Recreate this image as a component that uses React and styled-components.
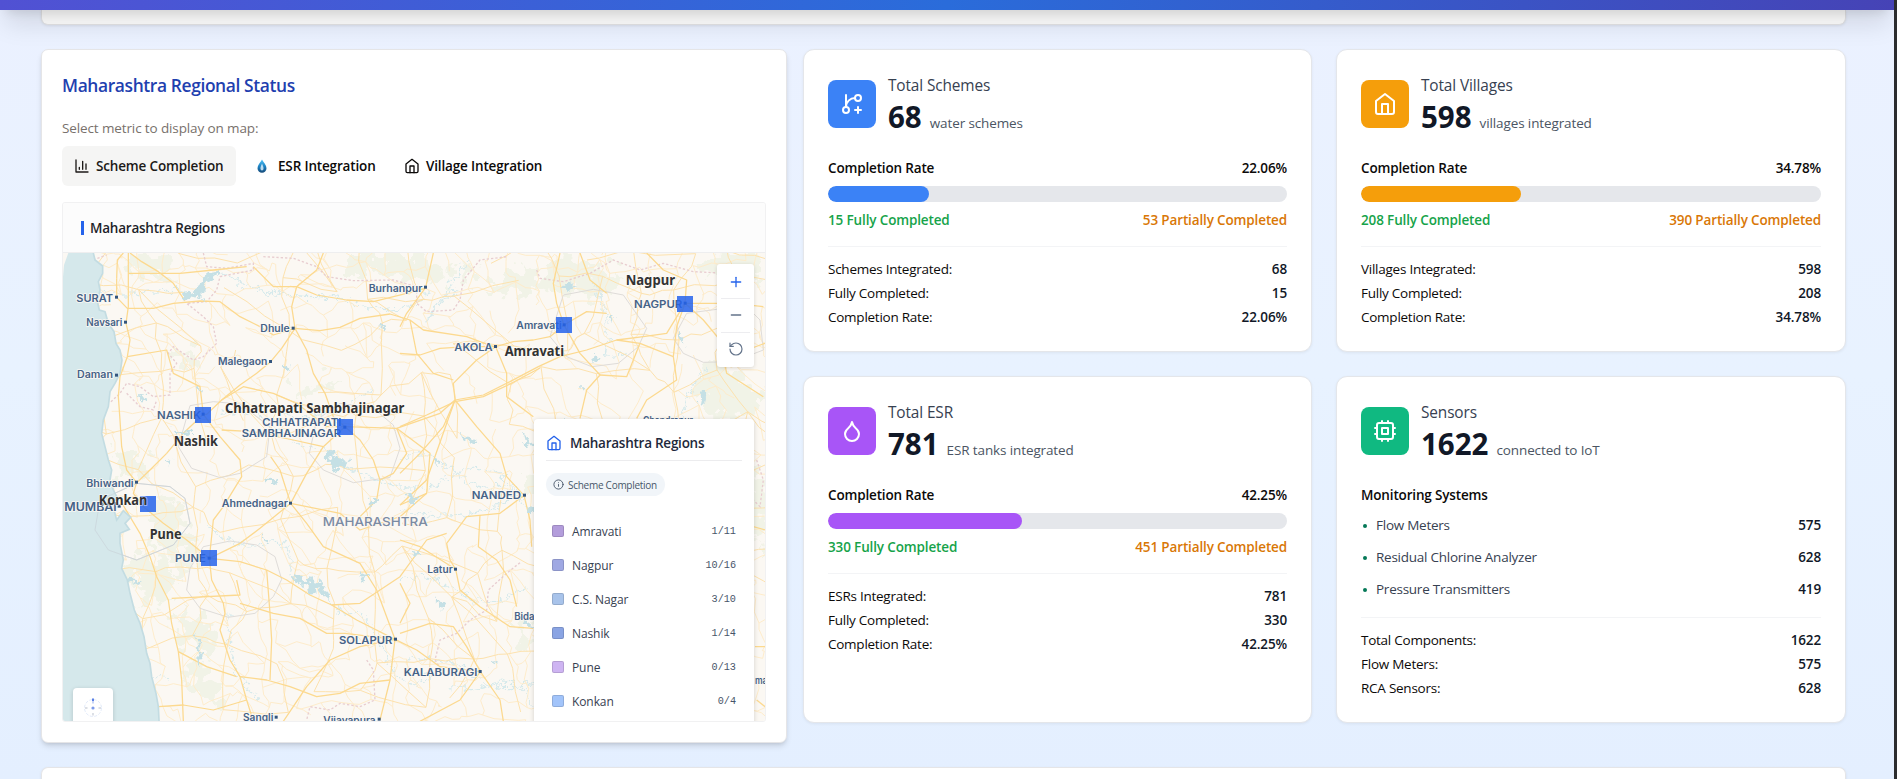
import React from "react";
import styled, { createGlobalStyle } from "styled-components";
import { GitBranchPlus, Droplet, Info, Plus, Minus, RotateCcw } from "lucide-react";

const Global = createGlobalStyle`
  *, *::before, *::after { box-sizing: border-box; }
  body { margin: 0; font-family: "Open Sans", "Noto Sans", sans-serif; color: #0c0a09; font-size: 13.5px; }
`;

const Page = styled.div`
  height: 779px;
  overflow: hidden;
  display: flex;
  flex-direction: column;
  border-right: 3px solid #2b2c2e;
  background: linear-gradient(180deg, #ebf1ff 0%, #e8f2ff 48%, #e4efff 100%);
`;

const TopBar = styled.header`
  flex: none;
  height: 80px;
  margin-top: -70px;
  position: relative;
  z-index: 5;
  background: linear-gradient(90deg, #5151d3 0%, #2a6cda 50%, #4643b6 100%);
  box-shadow: 0 20px 25px -5px rgba(0, 0, 0, 0.1), 0 8px 10px -6px rgba(0, 0, 0, 0.1);
`;

const Content = styled.main`
  flex: none;
  width: 1805px;
  margin-left: 41px;
  display: flex;
  flex-direction: column;
  gap: 24px;
`;

const Sheet = styled.section`
  height: ${(p) => p.$height}px;
  background: #fff;
  border: 1px solid #e5e5e7;
  border-radius: ${(p) => (p.$edge === "bottom" ? "0 0 7px 7px" : "7px 7px 0 0")};
  border-${(p) => (p.$edge === "bottom" ? "top" : "bottom")}: 0;
  box-shadow: 0 1px 3px rgba(0, 0, 0, 0.08);
`;

const Columns = styled.div`
  display: grid;
  grid-template-columns: 746px 1043px;
  justify-content: space-between;
  align-items: start;
`;

const Panel = styled.section`
  height: 694px;
  padding: 20px 20px 0;
  background: #fff;
  border: 1px solid #e5e5e7;
  border-radius: 7px;
  box-shadow: 0 4px 6px -1px rgba(0, 0, 0, 0.12), 0 2px 4px -2px rgba(0, 0, 0, 0.12);
`;

const PanelTitle = styled.h2`
  margin: 0;
  height: 30px;
  line-height: 30px;
  font-size: 17.4px;
  font-weight: 600;
  letter-spacing: -0.38px;
  color: #1e40af;
`;

const Hint = styled.div`
  margin-top: 18px;
  line-height: 20px;
  letter-spacing: -0.12px;
  color: #78716c;
`;

const Tabs = styled.div`
  display: flex;
  gap: 6px;
  margin-top: 8px;
`;

const Tab = styled.button`
  height: 40px;
  width: ${(p) => p.$width}px;
  padding: 0 0 0 ${(p) => p.$inset || 12}px;
  display: flex;
  align-items: center;
  gap: ${(p) => p.$gap || 6}px;
  border: 0;
  border-radius: 6px;
  background: ${(p) => (p.$active ? "#f5f5f4" : "transparent")};
  color: ${(p) => (p.$active ? "#1c1917" : "#0c0a09")};
  font: 600 13.5px "Open Sans", sans-serif;
  letter-spacing: -0.16px;
  white-space: nowrap;
`;

const MapBox = styled.div`
  margin-top: 16px;
  height: 520px;
  display: flex;
  flex-direction: column;
  border: 1px solid #f1f1f2;
  border-radius: 3px;
  overflow: hidden;
`;

const MapHead = styled.div`
  flex: none;
  height: 50px;
  padding: 0 18px;
  display: flex;
  align-items: center;
  gap: 6px;
  background: #fcfcfc;
  border-bottom: 1px solid #eeeeef;
  font-weight: 600;
  letter-spacing: -0.22px;
  color: #1c1f2a;
  &::before { content: ""; width: 3px; height: 14px; background: #2563eb; }
`;

const MapCanvas = styled.div`
  position: relative;
  flex: 1;
  overflow: hidden;
`;

const MapSvg = styled.svg`
  display: block;
  width: 702px;
  height: 469px;
`;

const Controls = styled.div`
  position: absolute;
  top: 11px;
  right: 11px;
  width: 37px;
  height: 103px;
  padding: 2px 4px;
  display: flex;
  flex-direction: column;
  background: #fff;
  border-radius: 3px;
  box-shadow: 0 1px 4px rgba(0, 0, 0, 0.14);
`;

const Control = styled.button`
  flex: 1;
  padding: 0;
  display: flex;
  align-items: center;
  justify-content: center;
  border: 0;
  background: none;
  color: ${(p) => p.$color};
  & + & { border-top: 1px solid #ededf0; }
`;

const Compass = styled.div`
  position: absolute;
  left: 10px;
  top: 435px;
  width: 40px;
  height: 40px;
  display: flex;
  align-items: center;
  justify-content: center;
  background: #fff;
  border-radius: 4px;
  box-shadow: 0 1px 4px rgba(0, 0, 0, 0.16);
`;

const Legend = styled.aside`
  position: absolute;
  left: 471px;
  top: 166px;
  width: 220px;
  height: 320px;
  padding: 7px 12px;
  background: #fff;
  border-radius: 4px 4px 0 0;
  box-shadow: 0 1px 5px rgba(0, 0, 0, 0.16);
`;

const LegendTitle = styled.div`
  height: 35px;
  padding-bottom: 1px;
  display: flex;
  align-items: center;
  gap: 8px;
  border-bottom: 1px solid #ececee;
  font-size: 13.5px;
  font-weight: 600;
  letter-spacing: -0.25px;
  color: #1e293b;
`;

const Pill = styled.div`
  width: 119px;
  height: 23px;
  margin: 12px 0 18px;
  padding: 0 0 0 7px;
  display: flex;
  align-items: center;
  gap: 4px;
  border-radius: 12px;
  background: #f1f5f9;
  font-size: 10px;
  letter-spacing: -0.27px;
  color: #475569;
  white-space: nowrap;
  svg { flex: none; }
`;

const LegendRow = styled.div`
  height: 34px;
  padding: 0 6px;
  display: flex;
  align-items: center;
  font-size: 12px;
  letter-spacing: -0.1px;
  color: #374151;
`;

const Swatch = styled.span`
  width: 12px;
  height: 12px;
  margin-right: 8px;
  border-radius: 2px;
  background: ${(p) => p.$color};
  border: 1px solid rgba(0, 0, 0, 0.12);
`;

const Ratio = styled.span`
  margin-left: auto;
  font: 10.2px "Liberation Mono", monospace;
  letter-spacing: 0;
  color: #475569;
`;

const Stats = styled.div`
  display: grid;
  grid-template-columns: 509px 510px;
  grid-template-rows: 303px 347px;
  gap: 24px;
`;

const Card = styled.article`
  padding: 30px 24px 0;
  background: #fff;
  border: 1px solid #e4e6ea;
  border-radius: 11px;
  box-shadow: 0 1px 3px rgba(0, 0, 0, 0.06);
`;

const CardHead = styled.div`
  height: 48px;
  display: flex;
  gap: 12px;
`;

const IconTile = styled.div`
  width: 48px;
  height: 48px;
  display: flex;
  align-items: center;
  justify-content: center;
  border-radius: 8px;
  background: ${(p) => p.$color};
  color: #fff;
`;

const HeadText = styled.div`
  display: flex;
  flex-direction: column;
`;

const CardTitle = styled.h3`
  margin: -6px 0 0;
  font-size: 15.4px;
  line-height: 24px;
  font-weight: 500;
  letter-spacing: -0.12px;
  color: #374151;
`;

const Figure = styled.div`
  display: flex;
  align-items: baseline;
  gap: 8px;
  margin-top: 1px;
  line-height: 36px;
`;

const Big = styled.span`
  font-size: 29.5px;
  font-weight: 700;
  color: #111827;
`;

const Unit = styled.span`
  letter-spacing: -0.12px;
  color: #4b5563;
`;

const Line = styled.div`
  display: flex;
  justify-content: space-between;
  line-height: ${(p) => p.$h || 24}px;
  font-weight: ${(p) => (p.$strong ? 600 : 400)};
  letter-spacing: ${(p) => (p.$strong ? -0.16 : -0.25)}px;
`;

const Value = styled.span`
  font-weight: 600;
  letter-spacing: -0.14px;
  color: ${(p) => p.$color || "#111827"};
`;

const Rate = styled.div`
  margin-top: 30px;
`;

const Track = styled.div`
  height: 16px;
  margin: 8px 0 6px;
  border-radius: 8px;
  background: #e5e7eb;
  overflow: hidden;
`;

const Fill = styled.div`
  height: 100%;
  border-radius: 8px;
  background: ${(p) => p.$color};
`;

const Details = styled.div`
  margin-top: ${(p) => p.$gap}px;
  padding-top: 10px;
  border-top: 1px solid #f3f4f6;
`;

const Systems = styled.ul`
  list-style: none;
  margin: 4px 0 0;
  padding: 0;
`;

const System = styled.li`
  height: 32px;
  display: flex;
  align-items: center;
  letter-spacing: -0.25px;
  color: #374151;
  &::before {
    content: "";
    width: 4px;
    height: 4px;
    margin: 1px 9px 0 2px;
    border-radius: 50%;
    background: #047857;
  }
  ${Value} { margin-left: auto; }
`;

const HomeIcon = ({ size, color = "currentColor", stroke = 2 }) => (
  <svg width={size} height={size} viewBox="0 0 24 24" fill="none" stroke={color} strokeWidth={stroke} strokeLinecap="round" strokeLinejoin="round">
    <path d="M3 9l9-7 9 7v11a2 2 0 0 1-2 2H5a2 2 0 0 1-2-2z" />
    <path d="M9 22V12h6v10" />
  </svg>
);

const ChartIcon = () => (
  <svg width="16" height="16" viewBox="0 0 24 24" fill="none" stroke="currentColor" strokeWidth="2" strokeLinecap="round" strokeLinejoin="round">
    <path d="M3 3v18h18M18 17V9M13 17V5M8 17v-3" />
  </svg>
);

const ChipIcon = () => (
  <svg width="24" height="24" viewBox="0 0 24 24" fill="none" stroke="currentColor" strokeWidth="2" strokeLinecap="round" strokeLinejoin="round">
    <rect x="4" y="4" width="16" height="16" rx="2" />
    <rect x="9" y="9" width="6" height="6" />
    <path d="M15 2v2M15 20v2M2 15h2M2 9h2M20 15h2M20 9h2M9 2v2M9 20v2" />
  </svg>
);

const DropIcon = () => (
  <svg width="12" height="14" viewBox="0 0 12 14">
    <defs>
      <linearGradient id="drop" x1="0" y1="0" x2="0" y2="1">
        <stop offset="0" stopColor="#4fc3f7" />
        <stop offset="0.55" stopColor="#1b7fc0" />
        <stop offset="1" stopColor="#174a78" />
      </linearGradient>
    </defs>
    <path d="M6 .5C7.600 3.600 10.500 6 10.500 9.200a4.500 4.500 0 0 1-9 0C1.500 6 4.400 3.600 6 .5z" fill="url(#drop)" />
    <path d="M6 4.500C6.800 6.500 7.700 8 7.500 9.700a1.500 1.700 0 0 1-3 0C4.300 8 5.200 6.500 6 4.500z" fill="#d8eefa" opacity="0.85" />
  </svg>
);

const CompassIcon = () => (
  <svg width="20" height="20" viewBox="0 0 20 20" fill="none">
    <circle cx="10" cy="10" r="8.500" stroke="#dbe4f8" strokeWidth="0.8" strokeDasharray="3 1.500" />
    <circle cx="10" cy="10" r="1.600" fill="#7d9bea" />
    <rect x="9" y="0.500" width="2" height="2.500" fill="#5a80e6" />
    <rect x="9" y="3" width="2" height="2.500" fill="#c9d6f7" />
    <path d="M2 10h2.500M15.500 10H18" stroke="#b9bfcb" strokeWidth="1.200" />
    <path d="M10 15v2.500" stroke="#d4d8e0" strokeWidth="1.600" />
  </svg>
);

/* ---------- Map drawing: one unit is a third of a pixel ---------- */

const COAST =
  "M60 0H165L160 39 165 60 188 78 188 100 175 125 180 150 172 185 178 210 195 215 205 250 222 275 228 310 240 330 246 360 240 400 225 430 210 455 205 500 190 540 185 580 195 620 205 660 215 690 210 720 220 750 230 770 222 810 230 840 250 812 272 832 255 850 268 868 240 880 240 910 250 960 245 985 262 1020 270 1060 283 1110 300 1150 312 1190 320 1240 330 1270 335 1310 348 1360 355 1400 358 1460H60Z";

const FORESTS = [
  "M270 60l50-20 60 30 20 50-40 10-60-30z", "M930 39h180l40 30 60 10-20 40-90-10-80-20-90 20z", "M760 455l50-25 60-10 20 20-50 20-60 15z",
  "M1330 150l60-50 90 10 80-60 100 20 20 50-110 40-90-20-100 30z", "M1570 100l50-40 110 30 20 50-110 30z", "M1960 60l60-20 130 10 20 70-90 20-90-30z",
  "M1960 640l60-20 90 60 60-10v180l-60-40-120-60-60-50z", "M1970 390l60-20 90 50 40 60-30 50-120 0-40-60z", "M1640 650l90-20 80 30 10 40-100-10-60 20z", "M1470 700l30 20 50 60-20 20-60-30z",
  "M350 760l60 30 30 80-20 40 50 30-10 60-60-10-40-90-40-50z", "M270 950l60-30 60 70 10 90-80 20-50-70z", "M400 1120l60-10 60 50 20 60-60 20-60-40z",
  "M440 1250l60 30 20 60 40 50-60-10-60-50z", "M225 640l50-20 40 30-10 60-60 20z", "M1100 39l90 20 30 60-60 10z", "M2140 760l30 10v160l-40-60z", "M390 330l60 10 30 50-50-10z",
  "M1250 60l70 20-10 50-70-20z", "M1420 1150l60 20 20 60-60-10z",
];

const LAKES = [
  "M440 155l25-5 25-35 25-20 35-3-15 12-22 8-18 30-6 38-20-12-20 15-12-10z",
  "M850 630l22 6 4 14 18-8 12 18 18 6-6 20-18-6-14 18-8-22-12-4 2-16-14-6z",
  "M760 1008l20 2 10 14 30-6 8 10 18-10-6 20 20 10 14 28-22-8-16-20-20 4-10-14-30-6z",
  "M470 1180l10 30 8 30-2 40-6-4-2-40-8-30z", "M400 565l20 8 30 2 4 10-26-2-20-8z", "M720 375l12 6 14-4-6 16-14-4z", "M466 430l14 8 4 12-14-6z",
  "M290 465l18 4 16 4-12 12-14-4z", "M380 655l14 6-8 12z", "M670 718l40 4 4 10-20-4-22 2z",
  "M1188 650l12 6v16l-8-6z",
  "M1570 135l20-8 16 12-20 10z", "M1640 590l22 4 12 16-26-8z", "M1920 270l10 20-4 20-8-24z", "M1985 680l12 16-8 36-6-26z",
  "M1560 725l30 4 20-4-6 12-40 0z", "M1650 555l14 6-12 8z", "M1100 773l26-6 14 6-20 12z", "M1450 810l30-8 20 20-30-4z", "M990 780l16-4 10 10-20 6z",
  "M1255 585l40 4 24 18-40-4z", "M1450 575l30 40-18 6z", "M1110 930l24 4 14 8-30 2z", "M1190 1070l20 30-8 12z", "M960 1000l20 8 8 14-22-10z", "M660 880l24 24-8 6z",
  "M1020 250l12 8-8 12z", "M1570 540l18 10-8 8z", "M1710 230l14 8-10 10z", "M262 1012l34 10-6 12-28-6z", "M1455 1140l14 0 8 26-14-2z",
  "M1660 345l20 4-8 14-16-8z", "M1620 435l10 4-8 8z", "M1985 460l14 4-6 24-14 6z", "M1350 1260l22 10-10 6z", "M868 500l0 0z", "M1100 768l20-8 6 14-18 6z", "M1195 1080l16 14-6 16z",
];

const RIVERS = [
  "M180 150Q230 175 300 160T440 155", "M550 95Q600 140 680 155T830 170 960 195 1100 200 1157 142", "M545 520Q640 500 700 560T880 640", "M925 680Q1000 720 1080 740T1250 700 1460 780",
  "M510 860Q600 940 680 910T750 1000", "M860 1070Q900 1130 940 1120T1040 1250 1180 1290", "M570 1120Q560 1220 590 1290T660 1380", "M1110 1260Q1220 1240 1290 1300T1480 1330",
  "M1660 135Q1720 230 1700 300T1760 340", "M2000 380Q1940 440 1920 560T1980 700", "M1080 810Q1200 840 1300 820T1420 760", "M1080 650Q1160 620 1240 690T1360 740 1460 800",
  "M1080 1010Q1180 1000 1260 1060T1460 1040", "M1240 1340Q1300 1350 1370 1330T1480 1400", "M340 1310Q370 1290 380 1330", "M730 520Q780 540 860 520T1000 440", "M1250 150Q1180 200 1160 240T1280 60",
];

const BORDERS = [
  "M160 60L200 45M490 39L500 80 560 85 640 70 640 90 540 110 530 150 500 185 440 190 490 230 520 260 530 310 490 350 460 360 400 320 385 340 410 370 390 400 390 465 340 470 300 440 260 430 240 460 210 488M260 460L300 500 340 510 350 480",
  "M670 50L760 55 830 80 860 110 940 122 1060 120 1130 140 1130 190 1160 215 1240 210 1260 180 1270 120 1320 60 1400 50",
  "M1490 90L1500 115 1570 125 1650 100 1720 60 1800 90 1870 70 1960 95 2060 100",
  "M1440 968L1400 1000 1345 1050 1340 1110 1290 1140 1250 1180 1200 1200 1185 1260M1185 1260L1210 1300M980 1260L1000 1290 1005 1380 960 1400 900 1390 870 1410 810 1400 800 1440",
  "M2150 660L2170 720 2160 800 2140 780",
];

const AREAS = [
  "450 497 520 485 600 492 690 560 680 650 600 700 540 713 455 685 415 620",
  "808 640 850 690 940 728 1050 712 1080 625 1060 555 1000 505 900 490 830 540",
  "1530 290 1570 165 1660 148 1750 165 1820 265 1795 320 1735 370 1655 380 1580 350",
  "1900 295 1940 220 2030 208 2120 200 2160 240 2170 330 2080 365 1990 367 1930 340",
  "440 1050 450 985 490 920 570 903 650 915 705 950 725 1018 700 1070 645 1120 565 1132 480 1105",
  "165 870 180 780 290 730 390 740 435 775 450 850 400 915 290 960 205 930",
];

const MAJOR = [
  "230 115 230 172 262 205 340 205 400 190 480 183 540 185 600 230 660 260 700 285 765 265 840 272 900 262 960 235 1050 222 1110 240 1150 270 1280 290 1360 320",
  "250 39 232 60 230 115", "265 39 265 200 258 250 270 300 262 350 240 410 235 470 240 540 245 620 260 690 290 728",
  "435 183 400 130 355 95 305 65 270 39", "265 100 420 100 520 90 620 80", "640 80 700 140 770 140 830 165 920 180 1000 185 1100 160 1156 145",
  "850 39 830 90 770 140 755 200 765 265 725 325 692 365 650 400 600 435 545 480 500 523 490 523", "765 265 800 330 820 400 855 460 880 530 915 560",
  "490 523 430 580 380 640 330 690 290 728", "490 523 540 590 600 660 605 710 550 800 520 840 508 955", "490 523 480 440 400 400 380 330 262 350", "915 560 1070 565 1200 520 1245 480",
  "915 560 960 600 1000 660 1020 720 1010 780 960 830", "915 560 850 620 800 700 752 790", "545 480 610 440 700 460 770 490 860 560 915 560", "1070 565 1100 640 1060 700 1020 720",
  "545 570 640 575 760 600 850 620", "1080 795 1160 760 1170 640 1070 565",
  "1110 240 1130 340 1180 400 1240 420", "1080 340 1140 345 1200 325 1280 320 1367 320 1420 305 1480 300 1530 290 1572 255 1640 215 1700 220",
  "1080 795 1160 720 1245 480 1330 465 1410 425 1495 380 1560 350 1640 330 1730 300 1810 290 1880 280 1935 190", "1080 560 1160 525 1245 485 1330 470 1410 432 1500 384",
  "1935 190 2080 190 2170 200", "1935 190 1940 120 1870 90 1820 39", "1935 190 1990 240 2040 300 2120 330 2175 310", "1935 190 1910 260 1900 350 1800 310 1730 300",
  "1157 142 1180 39", "1157 142 1100 220 1080 260", "1367 320 1400 400 1400 470 1480 530", "1367 320 1310 360 1240 430 1245 480 1210 560 1140 640 1080 700", "1572 255 1550 190 1540 130 1560 39",
  "1572 255 1620 340 1680 405 1640 450 1620 535", "1680 405 1760 410 1800 310", "1900 350 1910 420 1820 480 1790 535", "1245 480 1310 560 1380 640 1400 710 1452 766", "2040 300 2060 400 2170 470",
  "508 955 440 900 370 850 310 800 280 760 290 728", "508 955 600 965 680 990 740 1020 810 1065 875 1095 950 1140 1065 1198 1130 1230 1200 1280 1321 1295",
  "508 955 515 1020 550 1090 555 1120 540 1170 570 1260 600 1310 620 1380 640 1444", "600 1310 680 1320 750 1340 830 1370 900 1360 960 1330 1050 1320",
  "508 955 600 910 660 865 752 790 720 690 692 650", "752 790 800 850 850 920 960 970 1010 1050 1065 1198", "752 790 900 820 960 870 1080 830 1160 760",
  "240 780 300 880 330 950 350 1010 385 1080 395 1150 415 1235 425 1320 430 1444", "395 1075 600 1065 590 1020", "415 1235 500 1280 590 1310", "600 1090 700 1120 780 1135 860 1180 915 1180 1065 1198",
  "875 1095 960 1090 1080 1010 1160 900 1220 880", "1065 1198 1050 1320 1020 1440", "1065 1198 960 1220 870 1260 800 1340 730 1444", "680 990 690 1120 695 1200 690 1320",
  "1452 766 1380 820 1280 830 1220 910 1230 960 1247 988 1260 1050 1320 1100 1410 1160 1480 1165", "1247 988 1140 920 1080 900", "1321 1295 1280 1220 1240 1160 1170 1150 1080 1180", "1321 1295 1380 1380 1390 1444",
  "1452 766 1470 840 1475 920", "1321 1295 1260 1380 1140 1444", "1320 825 1315 920 1370 960 1410 1020 1430 1100", "1080 1030 1110 1090 1080 1150", "355 1400 430 1395 520 1410 620 1380",
  "2140 860 2175 870", "2145 1220 2175 1220", "2150 1380 2175 1400", "1620 39 1650 120 1700 160",
];

function buildRoadNet(seed, step, jitter, chance) {
  const rnd = () => ((seed = (seed * 16807) % 2147483647) / 2147483647);
  const cols = Math.ceil(2200 / step);
  const rows = Math.ceil(1480 / step);
  const pts = [];
  for (let r = 0; r < rows; r++)
    for (let c = 0; c < cols; c++)
      pts.push([50 + c * step + (rnd() - 0.5) * jitter, 20 + r * step + (rnd() - 0.5) * jitter]);
  let d = "";
  const link = (a, b) => {
    const w = () => (rnd() - 0.5) * 20;
    const at = (t) => `${(a[0] + (b[0] - a[0]) * t + w()).toFixed(0)} ${(a[1] + (b[1] - a[1]) * t + w()).toFixed(0)}`;
    d += `M${a[0].toFixed(0)} ${a[1].toFixed(0)}L${at(0.3)} ${at(0.65)} ${b[0].toFixed(0)} ${b[1].toFixed(0)}`;
  };
  for (let r = 0; r < rows; r++)
    for (let c = 0; c < cols; c++) {
      const i = r * cols + c;
      if (c < cols - 1 && rnd() < chance) link(pts[i], pts[i + 1]);
      if (r < rows - 1 && rnd() < chance) link(pts[i], pts[i + cols]);
      if (c < cols - 1 && r < rows - 1 && rnd() < 0.22) link(pts[i], pts[i + cols + 1]);
    }
  return d;
}
const MINOR = buildRoadNet(7919, 62, 52, 0.6);
const SECONDARY = buildRoadNet(4211, 135, 100, 0.6);

/* name, left edge, baseline, drawn width, size, dot centre */
const PLACES = [
  ["SURAT", 109, 187, 110, 31, 230, 172], ["Navsari", 139, 259, 108, 29, 257, 247], ["Burhanpur", 986, 155, 161, 29, 1157, 142],
  ["Dhule", 661, 276, 88, 29, 760, 265], ["Malegaon", 534, 376, 148, 29, 692, 365], ["Daman", 111, 415, 108, 29, 230, 406],
  ["NASHIK", 351, 536, 132, 31, 490, 523], ["CHHATRAPATI", 667, 558, 237, 31], ["SAMBHAJINAGAR", 605, 591, 298, 31, 915, 562],
  ["Bhiwandi", 139, 740, 142, 29, 290, 727], ["MUMBAI", 73, 813, 157, 34, 238, 799], ["Ahmednagar", 545, 801, 199, 29, 752, 790],
  ["PUNE", 405, 966, 92, 31, 508, 955], ["SOLAPUR", 897, 1212, 160, 31, 1067, 1198], ["Sangli", 609, 1444, 91, 29, 709, 1432],
  ["Vijayapura", 850, 1453, 157, 29, 1018, 1438], ["NANDED", 1295, 778, 148, 31, 1454, 766], ["Latur", 1162, 1000, 76, 29, 1247, 988],
  ["KALABURAGI", 1091, 1308, 221, 31, 1321, 1295], ["Bidar", 1423, 1140, 72, 29], ["mam", 2145, 1331, 60, 29], ["AKOLA", 1243, 332, 115, 31, 1367, 320],
  ["Amravati", 1429, 266, 136, 29, 1573, 255], ["NAGPUR", 1782, 203, 145, 31, 1936, 190], ["Chandrapur", 1809, 552, 150, 29],
];

const REGIONS = [
  ["Chhatrapati Sambhajinagar", 555, 518, 538, 891, 537], ["Nashik", 401, 617, 133, 465, 501], ["Nagpur", 1757, 134, 148, 1911, 168],
  ["Amravati", 1394, 348, 178, 1548, 231], ["Konkan", 176, 795, 146, 300, 768], ["Pune", 329, 897, 96, 483, 930],
];

const RegionMap = () => (
  <MapSvg viewBox="69 39 2106 1407" preserveAspectRatio="none">
    <defs>
      <filter id="ragged" x="-2%" y="-2%" width="104%" height="104%">
        <feTurbulence type="fractalNoise" baseFrequency="0.045" numOctaves="3" seed="4" />
        <feDisplacementMap in="SourceGraphic" scale="44" xChannelSelector="R" yChannelSelector="G" />
      </filter>
      <filter id="patchy" x="-2%" y="-2%" width="104%" height="104%">
        <feTurbulence type="fractalNoise" baseFrequency="0.025" numOctaves="3" seed="9" />
        <feDisplacementMap in="SourceGraphic" scale="130" xChannelSelector="R" yChannelSelector="G" />
      </filter>
    </defs>
    <rect x="60" y="30" width="2130" height="1430" fill="#fbf8f3" />
    <g fill="#f1f3e7" filter="url(#patchy)">{FORESTS.map((d, i) => <path key={i} d={d} />)}</g>
    <g fill="none" stroke="#d6eaec" strokeWidth="3.4" filter="url(#ragged)">{RIVERS.map((d, i) => <path key={i} d={d} />)}</g>
    <path d={MINOR} fill="none" stroke="#feeccb" strokeWidth="3" strokeLinejoin="round" />
    <path d={SECONDARY} fill="none" stroke="#fde2ae" strokeWidth="3" strokeLinejoin="round" />
    <g fill="none" stroke="#e8cdd0" strokeWidth="4" strokeDasharray="7 6">{BORDERS.map((d, i) => <path key={i} d={d} />)}</g>
    <g fill="none" stroke="#dfdcd9" strokeWidth="3">{AREAS.map((p, i) => <polygon key={i} points={p} />)}</g>
    <g fill="none" stroke="#fcd98f" strokeWidth="3.8" strokeLinejoin="round">{MAJOR.map((p, i) => <polyline key={i} points={p} />)}</g>
    <g fill="#c5e0e5" filter="url(#ragged)">{LAKES.map((d, i) => <path key={i} d={d} />)}</g>
    <path d={COAST} fill="#d5e8eb" stroke="#c3dce2" strokeWidth="5" />
    <path d="M60 39H85L72 75 69 110H60Z" fill="#fbf8f3" />
    <polygon points={AREAS[5]} fill="none" stroke="#c9d3d8" strokeWidth="3" opacity="0.7" />
    <g fontFamily="Inter, sans-serif" fontWeight="600" fill="#456287" stroke="#fbf8f3" strokeWidth="5" strokeLinejoin="round" paintOrder="stroke">
      {PLACES.map(([name, x, y, w, size, dx, dy]) => (
        <g key={name}>
          <text x={x} y={y} fontSize={size} textLength={w} lengthAdjust="spacingAndGlyphs">{name}</text>
          {dx && <rect x={dx - 5} y={dy - 5} width="9" height="9" fill="#33557e" stroke="none" />}
        </g>
      ))}
      <text x="848" y="858" fontSize="37" fontWeight="500" textLength="315" lengthAdjust="spacingAndGlyphs" fill="#7b8ba3">MAHARASHTRA</text>
    </g>
    {REGIONS.map(([name, x, y, w, mx, my]) => (
      <g key={name}>
        <rect x={mx} y={my} width="48" height="48" fill="#2563eb" opacity="0.85" />
        <text x={x} y={y} fontFamily="Noto Sans, sans-serif" fontWeight="700" fontSize="41" fill="#333" stroke="#fff" strokeOpacity="0.55" strokeWidth="5" paintOrder="stroke" textLength={w} lengthAdjust="spacingAndGlyphs">{name}</text>
      </g>
    ))}
  </MapSvg>
);

const LEGEND = [
  ["Amravati", "1/11", "#b39ddb"], ["Nagpur", "10/16", "#9fa8e3"], ["C.S. Nagar", "3/10", "#a8c3ea"],
  ["Nashik", "1/14", "#8aa4e3"], ["Pune", "0/13", "#ceb4f2"], ["Konkan", "0/4", "#a2c4fa"],
];

const completion = (label, total, full, rate) => [[label, total], ["Fully Completed:", full], ["Completion Rate:", rate]];

const CARDS = [
  { title: "Total Schemes", value: "68", unit: "water schemes", color: "#3b82f6", icon: <GitBranchPlus size={24} />, rate: 22.06, full: 15, part: 53, details: completion("Schemes Integrated:", "68", "15", "22.06%") },
  { title: "Total Villages", value: "598", unit: "villages integrated", color: "#f59e0b", icon: <HomeIcon size={24} />, rate: 34.78, full: 208, part: 390, details: completion("Villages Integrated:", "598", "208", "34.78%") },
  { title: "Total ESR", value: "781", unit: "ESR tanks integrated", color: "#a855f7", icon: <Droplet size={24} />, rate: 42.25, full: 330, part: 451, details: completion("ESRs Integrated:", "781", "330", "42.25%") },
  { title: "Sensors", value: "1622", unit: "connected to IoT", color: "#10b981", icon: <ChipIcon />, systems: [["Flow Meters", 575], ["Residual Chlorine Analyzer", 628], ["Pressure Transmitters", 419]], details: [["Total Components:", "1622"], ["Flow Meters:", "575"], ["RCA Sensors:", "628"]] },
];

const StatCard = ({ c }) => (
  <Card>
    <CardHead>
      <IconTile $color={c.color}>{c.icon}</IconTile>
      <HeadText>
        <CardTitle>{c.title}</CardTitle>
        <Figure><Big>{c.value}</Big><Unit>{c.unit}</Unit></Figure>
      </HeadText>
    </CardHead>
    <Rate>
      {c.systems ? (
        <>
          <Line $strong $h={20}>Monitoring Systems</Line>
          <Systems>
            {c.systems.map(([n, v]) => <System key={n}>{n}<Value>{v}</Value></System>)}
          </Systems>
        </>
      ) : (
        <>
          <Line $strong $h={20}><span>Completion Rate</span><span>{c.rate}%</span></Line>
          <Track><Fill $color={c.color} style={{ width: `${c.rate}%` }} /></Track>
          <Line $strong $h={24}>
            <Value $color="#16a34a">{c.full} Fully Completed</Value>
            <Value $color="#d97706">{c.part} Partially Completed</Value>
          </Line>
        </>
      )}
    </Rate>
    <Details $gap={c.systems ? 12 : 14}>
      {c.details.map(([k, v]) => <Line key={k}><span>{k}</span><Value>{v}</Value></Line>)}
    </Details>
  </Card>
);

export default function App() {
  return (
    <Page>
      <Global />
      <TopBar />
      <Content>
        <Sheet $edge="bottom" $height={15} />
        <Columns>
          <Panel>
            <PanelTitle>Maharashtra Regional Status</PanelTitle>
            <Hint>Select metric to display on map:</Hint>
            <Tabs>
              <Tab $active $width={174}><ChartIcon />Scheme Completion</Tab>
              <Tab $width={144} $inset={14} $gap={10}><DropIcon />ESR Integration</Tab>
              <Tab $width={164}><HomeIcon size={16} />Village Integration</Tab>
            </Tabs>
            <MapBox>
              <MapHead>Maharashtra Regions</MapHead>
              <MapCanvas>
                <RegionMap />
                <Controls>
                  <Control $color="#2563eb"><Plus size={16} /></Control>
                  <Control $color="#64748b"><Minus size={16} /></Control>
                  <Control $color="#64748b"><RotateCcw size={16} strokeWidth={1.8} /></Control>
                </Controls>
                <Compass><CompassIcon /></Compass>
                <Legend>
                  <LegendTitle><HomeIcon size={16} color="#2563eb" />Maharashtra Regions</LegendTitle>
                  <Pill><Info size={11} />Scheme Completion</Pill>
                  {LEGEND.map(([n, r, col]) => (
                    <LegendRow key={n}><Swatch $color={col} />{n}<Ratio>{r}</Ratio></LegendRow>
                  ))}
                </Legend>
              </MapCanvas>
            </MapBox>
          </Panel>
          <Stats>{CARDS.map((c) => <StatCard key={c.title} c={c} />)}</Stats>
        </Columns>
        <Sheet $edge="top" $height={20} />
      </Content>
    </Page>
  );
}
